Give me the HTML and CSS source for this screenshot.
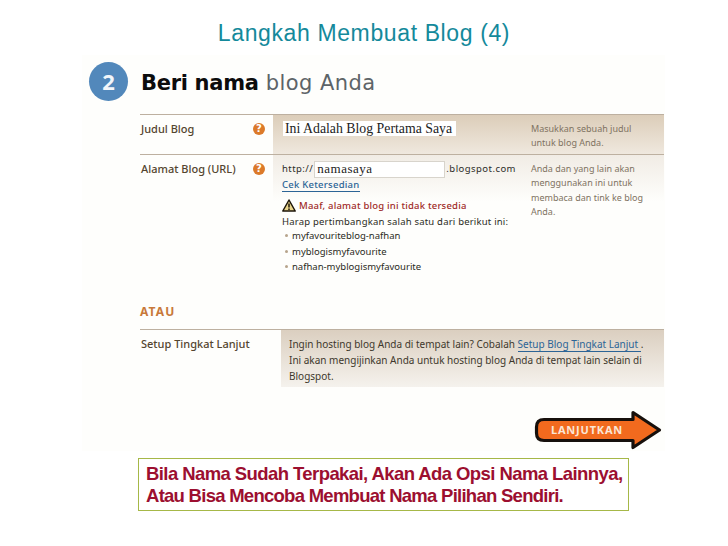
FILE: index.html
```html
<!DOCTYPE html>
<html lang="id">
<head>
<meta charset="utf-8">
<title>Langkah Membuat Blog (4)</title>
<link rel="stylesheet" href="styles.css">
</head>
<body>
<h1 class="title">Langkah Membuat Blog (4)</h1>
<main class="panel">
  <header class="head">
    <span class="step">2</span>
    <h2 class="head-text"><b>Beri nama</b> blog Anda</h2>
  </header>
  <section class="row row-title">
    <div class="label"><span>Judul Blog</span><i class="help">?</i></div>
    <div class="field shade-a">
      <div class="input input-title">Ini Adalah Blog Pertama Saya</div>
      <p class="hint">Masukkan sebuah judul<br>untuk blog Anda.</p>
    </div>
  </section>
  <section class="row row-url">
    <div class="label"><span>Alamat Blog (URL)</span><i class="help">?</i></div>
    <div class="field shade-b">
      <div class="url-body">
        <div class="url-line">http://<div class="input input-url">namasaya</div>.blogspot.com</div>
        <a class="link check">Cek Ketersedian</a>
        <div class="warn">
          <svg class="warn-icon" viewBox="0 0 14 13" width="14" height="13"><path d="M7 1 L13.2 12 H.8 Z" fill="#e8d48a" stroke="#1c1408" stroke-width="1.5" stroke-linejoin="round"/><path d="M7 4.5v4M7 9.6v1.4" stroke="#1c1408" stroke-width="1.500"/></svg>
          <span>Maaf, alamat blog ini tidak tersedia</span>
        </div>
        <p class="plain">Harap pertimbangkan salah satu dari berikut ini:</p>
        <ul class="options">
          <li>myfavouriteblog-nafhan</li>
          <li>myblogismyfavourite</li>
          <li>nafhan-myblogismyfavourite</li>
        </ul>
      </div>
      <p class="hint">Anda dan yang lain akan<br>menggunakan ini untuk<br>membaca dan tink ke blog<br>Anda.</p>
    </div>
  </section>
  <h3 class="or">ATAU</h3>
  <section class="row row-setup">
    <div class="label"><span>Setup Tingkat Lanjut</span></div>
    <div class="setup">Ingin hosting blog Anda di tempat lain? Cobalah <a class="link">Setup Blog Tingkat Lanjut </a>.<br>Ini akan mengijinkan Anda untuk hosting blog Anda di tempat lain selain di<br>Blogspot.</div>
  </section>
  <div class="next">
    <div class="arrow">
      <svg class="arrow-shape" viewBox="0 0 128 40" width="128" height="40"><path d="M10 9.500 H99 V2.500 L125.500 20 L99 37.500 V30.500 H10 Q2.500 30.500 2.500 23 V17 Q2.500 9.500 10 9.500 Z" fill="#f26a1e" stroke="#17100c" stroke-width="3.200" stroke-linejoin="round"/></svg>
      <span class="arrow-label">LANJUTKAN</span>
    </div>
  </div>
</main>
<aside class="note">Bila Nama Sudah Terpakai, Akan Ada Opsi Nama Lainnya,<br><span class="note-tight">Atau Bisa Mencoba Membuat Nama Pilihan Sendiri.</span></aside>
</body>
</html>
```
FILE: styles.css
```css
* { box-sizing: border-box; }
html, body { margin: 0; padding: 0; }
body { width: 728px; height: 546px; overflow: hidden; background: #fff; font-family: "Noto Sans", "DejaVu Sans", sans-serif; }
.title { margin: 0; height: 55px; padding-top: 19px; text-align: center; font: 400 23px/28px "Liberation Sans", sans-serif; color: #14899b; letter-spacing: .62px; }
.panel { margin-left: 82px; width: 583px; height: 396px; padding: 7px 1px 0 58px; background: #fefefc; position: relative; }
.head { display: flex; align-items: center; gap: 13px; margin-left: -51px; height: 39px; }
.step { width: 39px; height: 39px; border-radius: 50%; background: #5288bb; color: #f2f6fa; font: 700 22px/38px "Noto Sans", sans-serif; text-align: center; }
.head-text { margin: 2px 0 0; font: 400 21px/26px "DejaVu Sans", sans-serif; color: #5d6468; letter-spacing: .45px; }
.head-text b { color: #0c0c0c; letter-spacing: -.3px; }
.row { display: grid; grid-template-columns: 133px 1fr; border-top: 1px solid #bdb0a0; font-size: 10px; }
.row-title { margin-top: 13px; height: 40px; }
.row-url { height: 141px; }
.row-setup { grid-template-columns: 141px 1fr; height: 58px; }
.label { display: flex; justify-content: space-between; align-items: flex-start; padding: 7px 8px 0 1px; font: 500 11px/14px "Noto Sans", sans-serif; color: #54452f; }
.help { width: 12px; height: 12px; border-radius: 50%; background: #dc7a2a; color: #fff; font: 700 10px/12px "DejaVu Sans", sans-serif; text-align: center; margin-top: 1px; }
.field { display: flex; justify-content: space-between; padding-left: 9px; }
.shade-a { background: linear-gradient(#dccdb9, #efe8de); }
.shade-b { background: linear-gradient(#f1ece5, #fefefc 33%); }
.input { background: #fff; color: #222; font-family: "Liberation Serif", serif; }
.input-title { width: 173px; height: 15px; margin: 6px 0 0 1px; font-size: 13.800px; line-height: 15px; padding-left: 2px; }
.hint { margin: 0; width: 133px; font: 400 9px/14.500px "Noto Sans", sans-serif; color: #7f7362; padding-top: 6.500px; }
.url-body { padding-top: 5px; color: #2a2a22; font-size: 9.500px; }
.url-line { display: flex; align-items: center; height: 18px; font: 400 9.500px/18px "Noto Sans", sans-serif; letter-spacing: .45px; color: #2c2c28; }
.input-url { flex: none; width: 131px; height: 17px; border: 1px solid #d8d4cc; font-size: 13px; font-weight: 400; line-height: 14px; padding-left: 2px; margin: 0 1px; letter-spacing: .5px; }
.link { color: #2c6496; border-bottom: 1px solid #2c6496; }
.check { display: inline-block; font-weight: 500; line-height: 13px; letter-spacing: .25px; }
.warn { display: flex; align-items: center; gap: 3px; margin-top: 6px; height: 14px; color: #a02a28; letter-spacing: .2px; font-weight: 500; }
.plain { margin: 2px 0 0; line-height: 15px; letter-spacing: .2px; }
.options { margin: -1px 0 0; padding: 0; list-style: none; }
.options li { line-height: 15.500px; padding-left: 10px; position: relative; }
.options li::before { content: ""; position: absolute; left: 3px; top: 6px; width: 3px; height: 3px; border-radius: 50%; background: #b7a48c; }
.or { margin: 0; height: 34px; padding-top: 10px; font: 700 12px/14px "Noto Sans", sans-serif; letter-spacing: 1.100px; color: #c8793a; }
.setup { background: linear-gradient(#dbcfc0, #f5f2ed); padding: 6px 0 0 8px; font-size: 10px; line-height: 16px; color: #3e382c; }
.next { display: flex; justify-content: flex-end; padding: 23px 2px 0 0; }
.arrow { position: relative; width: 128px; height: 40px; }
.arrow-shape { display: block; }
.arrow-label { position: absolute; left: 17px; top: 12px; font: 700 11px/16px "Noto Sans", sans-serif; color: #fbe6d6; letter-spacing: .8px; }
.note { margin: 7px 0 0 138px; width: 491px; height: 53px; border: 1px solid #a6b848; padding: 4px 0 0 7px; font: 700 18.500px/22px "Liberation Sans", sans-serif; color: #9c0f30; letter-spacing: -.58px; background: #fff; white-space: nowrap; }
.note-tight { letter-spacing: -.73px; }
```
